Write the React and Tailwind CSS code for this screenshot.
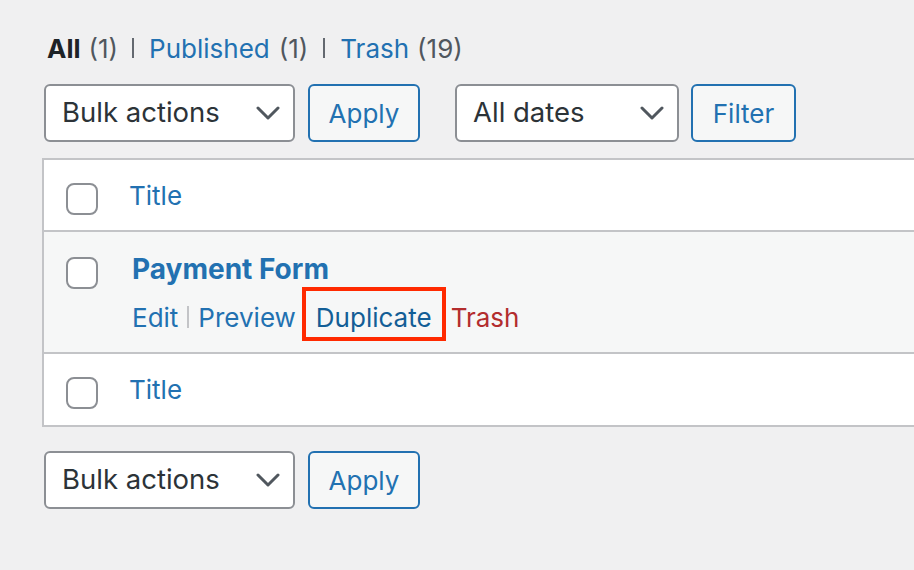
import React from "react";

const font = { fontFamily: "Inter, 'Noto Sans', sans-serif" };

function Chevron() {
  return (
    <svg width="24" height="14" viewBox="0 0 24 14" className="shrink-0">
      <path d="M2 2 L12 12 L22 2" fill="none" stroke="#50575e" strokeWidth="3" strokeLinecap="round" strokeLinejoin="round" />
    </svg>
  );
}

function Select({ label, w }) {
  return (
    <div className={`${w} h-[58px] flex items-center justify-between bg-white border-2 border-[#8c8f94] rounded-[6px] pl-[16px] pr-[13px] text-[27.5px] text-[#2c3338]`}>
      <span>{label}</span>
      <Chevron />
    </div>
  );
}

function Button({ label, w }) {
  return (
    <div className={`${w} h-[58px] flex items-center justify-center bg-[#f6f7f7] border-2 border-[#2271b1] rounded-[6px] text-[26px] text-[#2271b1]`}>
      {label}
    </div>
  );
}

function Checkbox() {
  return <div className="w-[32px] h-[32px] shrink-0 bg-white border-2 border-[#8c8f94] rounded-[8px]" />;
}

export default function App() {
  return (
    <div className="w-[914px] h-[570px] overflow-hidden bg-[#f0f0f1] pl-[42px] pt-[29px]" style={font}>
      <div className="flex items-center h-[38px] pl-[5px] text-[26px] text-[#50575e]">
        <span className="font-bold text-[#1d2327]">All</span>
        <span className="ml-[8px]">(1)</span>
        <div className="ml-[14px] mr-[15px] w-[2px] h-[20px] bg-[#646970]" />
        <span className="text-[#2271b1]">Published</span>
        <span className="ml-[9px]">(1)</span>
        <div className="ml-[15px] mr-[15px] w-[2px] h-[20px] bg-[#646970]" />
        <span className="text-[#2271b1]">Trash</span>
        <span className="ml-[8px]">(19)</span>
      </div>

      <div className="flex items-center mt-[17px] pl-[2px]">
        <Select label="Bulk actions" w="w-[251px]" />
        <div className="w-[13px]" />
        <Button label="Apply" w="w-[112px]" />
        <div className="w-[35px]" />
        <Select label="All dates" w="w-[224px]" />
        <div className="w-[12px]" />
        <Button label="Filter" w="w-[105px]" />
      </div>

      <div className="mt-[16px] w-[900px] border-2 border-[#c3c4c7] bg-white">
        <div className="h-[72px] flex items-start pl-[22px] border-b-2 border-[#c3c4c7]">
          <div className="mt-[23px]">
            <Checkbox />
          </div>
          <span className="ml-[31px] mt-[19px] text-[26px] leading-[34px] text-[#2271b1]">Title</span>
        </div>
        <div className="h-[122px] bg-[#f6f7f7] border-b-2 border-[#c3c4c7] pl-[22px] pt-[25px] flex">
          <Checkbox />
          <div className="ml-[34px] flex flex-col">
            <span className="text-[28px] leading-[28px] font-bold text-[#2271b1] -mt-[2px]">Payment Form</span>
            <div className="flex items-center h-[54px] mt-[4px] text-[26px] text-[#2271b1]">
              <span className="pt-[6px]">Edit</span>
              <div className="mt-[6px] ml-[9px] mr-[9px] w-[2px] h-[22px] bg-[#c3c4c7]" />
              <span className="pt-[6px]">Preview</span>
              <div className="ml-[6px] h-[54px] pt-[6px] px-[10px] flex items-center border-[4px] border-[#ff2a00] text-[#135e96]">
                Duplicate
              </div>
              <span className="pt-[6px] ml-[5px] text-[#b32d2e]">Trash</span>
            </div>
          </div>
        </div>
        <div className="h-[71px] flex items-start pl-[22px]">
          <div className="mt-[23px]">
            <Checkbox />
          </div>
          <span className="ml-[31px] mt-[19px] text-[26px] leading-[34px] text-[#2271b1]">Title</span>
        </div>
      </div>

      <div className="flex items-center mt-[24px] pl-[2px]">
        <Select label="Bulk actions" w="w-[251px]" />
        <div className="w-[13px]" />
        <Button label="Apply" w="w-[112px]" />
      </div>
    </div>
  );
}
